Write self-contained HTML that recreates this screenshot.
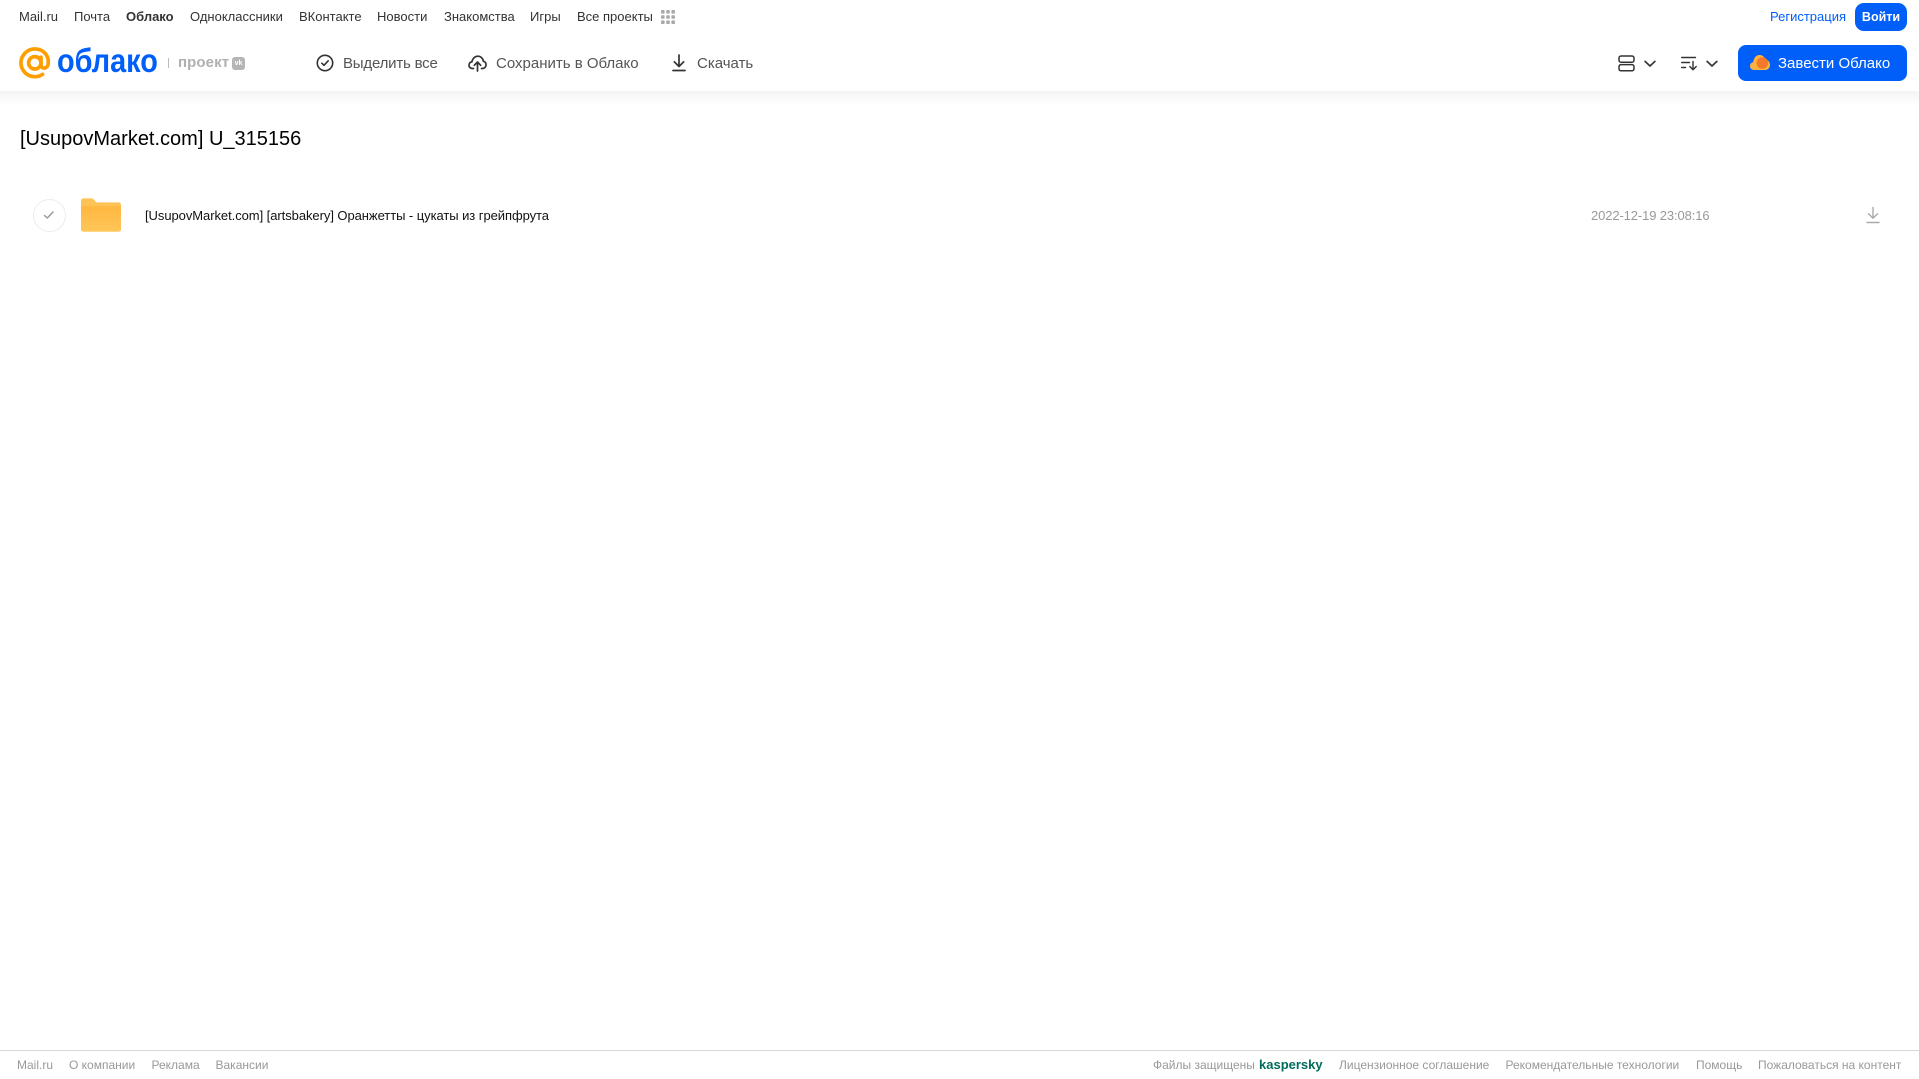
<!DOCTYPE html>
<html lang="ru">
<head>
<meta charset="utf-8">
<title>Облако</title>
<style>
html,body{margin:0;padding:0;width:1919px;height:1079px;overflow:hidden;background:#fff}
body{position:relative;font-family:"Liberation Sans",Arial,sans-serif}
.t{position:absolute;white-space:nowrap;line-height:20px;height:20px}
.n{font-size:13px;color:#333;top:7px}
.a{font-size:15px;color:#555;top:54px}
.f{font-size:12px;color:#999;top:1055px}
svg{position:absolute;overflow:visible}
</style>
</head>
<body>
<div style="position:absolute;left:0;top:91px;width:1919px;height:14px;background:linear-gradient(#f4f4f4,#fff)"></div>

<span class="t n" style="left:19px">Mail.ru</span>
<span class="t n" style="left:74px">Почта</span>
<span class="t n" style="left:126px;font-weight:bold">Облако</span>
<span class="t n" style="left:190px">Одноклассники</span>
<span class="t n" style="left:299px">ВКонтакте</span>
<span class="t n" style="left:377px">Новости</span>
<span class="t n" style="left:444px">Знакомства</span>
<span class="t n" style="left:530px">Игры</span>
<span class="t n" style="left:577px">Все проекты</span>
<svg style="left:660px;top:9px" width="16" height="16" viewBox="0 0 16 16" fill="#aaa">
<rect x="1" y="1" width="3.6" height="3.6" rx=".8"/><rect x="6.2" y="1" width="3.6" height="3.6" rx=".8"/><rect x="11.4" y="1" width="3.6" height="3.6" rx=".8"/>
<rect x="1" y="6.2" width="3.6" height="3.6" rx=".8"/><rect x="6.2" y="6.2" width="3.6" height="3.6" rx=".8"/><rect x="11.4" y="6.2" width="3.6" height="3.6" rx=".8"/>
<rect x="1" y="11.4" width="3.6" height="3.6" rx=".8"/><rect x="6.2" y="11.4" width="3.6" height="3.6" rx=".8"/><rect x="11.4" y="11.4" width="3.6" height="3.6" rx=".8"/>
</svg>
<span class="t" style="left:1770px;top:7px;font-size:13px;color:#005ff9">Регистрация</span>
<div class="t" style="left:1855px;top:3px;width:52px;height:28px;line-height:28px;background:#005ff9;border-radius:9px;color:#fff;font-size:12.5px;font-weight:bold;text-align:center">Войти</div>

<!-- logo -->
<svg style="left:19px;top:47px" width="32" height="32" viewBox="0 0 33 33" fill="none" stroke="#ff9e00" stroke-width="3.8">
<circle cx="16.3" cy="16.3" r="6.4"/>
<path d="M22.7 10.5V18.5C22.7 23 29.7 23 30.2 17C31 8 24.5 2 16.3 2C8.5 2 2 8.5 2 16.3C2 24.3 8.5 30.6 16.3 30.6C19.5 30.6 22 29.8 24.3 28.2" stroke-linecap="round"/>
</svg>
<span class="t" style="left:57px;top:43px;height:36px;line-height:36px;font-size:33px;font-weight:bold;color:#005ff9;transform:scaleX(.875);transform-origin:0 50%">облако</span>
<div style="position:absolute;left:168px;top:58px;width:1px;height:10px;background:#bbb"></div>
<span class="t" style="left:178px;top:53px;font-size:15px;font-weight:bold;color:#b0b0b0;letter-spacing:.1px">проект</span>
<div style="position:absolute;left:232px;top:57px;width:13px;height:13px;background:#b5b5b5;border-radius:3px;color:#fff;font-size:7px;font-weight:bold;line-height:13px;text-align:center">vk</div>

<!-- actions -->
<svg style="left:316px;top:54px" width="18" height="18" viewBox="0 0 18 18" fill="none" stroke="#333" stroke-width="1.6">
<circle cx="9" cy="9" r="7.7"/><path d="M5.8 9.2L8 11.3L12.2 6.8" stroke-linecap="round" stroke-linejoin="round"/>
</svg>
<span class="t a" style="left:343px;letter-spacing:-.2px">Выделить все</span>
<svg style="left:468px;top:54px" width="19" height="18" viewBox="0 0 19 18" fill="none" stroke="#333" stroke-width="1.7" stroke-linecap="round" stroke-linejoin="round">
<path d="M5.5 14.5H4.3C2.4 14.5 1 13 1 11.2C1 9.5 2.2 8.1 3.9 7.9C4.3 4.9 6.7 2.2 9.8 2.2C12.7 2.2 15 4.4 15.4 7.3C17 7.6 18 9 18 10.7C18 12.8 16.5 14.5 14.5 14.5H13.5"/>
<path d="M9.5 17V8.5M6.3 11.3L9.5 8L12.7 11.3"/>
</svg>
<span class="t a" style="left:496px">Сохранить в Облако</span>
<svg style="left:671px;top:54px" width="16" height="18" viewBox="0 0 16 18" fill="none" stroke="#333" stroke-width="1.7" stroke-linecap="round" stroke-linejoin="round">
<path d="M8 1V12M3.3 7.8L8 12.5L12.7 7.8M2 16.5H14"/>
</svg>
<span class="t a" style="left:697px">Скачать</span>

<!-- right controls -->
<svg style="left:1618px;top:55px" width="17" height="17" viewBox="0 0 17 17" fill="none" stroke="#333" stroke-width="1.5">
<rect x="1" y="1" width="15" height="6.2" rx="2"/><rect x="1" y="9.6" width="15" height="6.2" rx="2"/>
</svg>
<svg style="left:1644px;top:60px" width="12" height="8" viewBox="0 0 13 8" fill="none" stroke="#333" stroke-width="1.8" stroke-linecap="round" stroke-linejoin="round"><path d="M1.2 1.2L6.5 6.2L11.8 1.2"/></svg>
<svg style="left:1681px;top:56px" width="17" height="15" viewBox="0 0 17 15" fill="none" stroke="#333" stroke-width="1.4" stroke-linecap="round" stroke-linejoin="round">
<path d="M.7 1.5H14.5M.7 6.5H8.5M.7 11.5H4.5M12 5.5V13.5M8.8 10.5L12 13.7L15.2 10.5"/>
</svg>
<svg style="left:1706px;top:60px" width="12" height="8" viewBox="0 0 13 8" fill="none" stroke="#333" stroke-width="1.8" stroke-linecap="round" stroke-linejoin="round"><path d="M1.2 1.2L6.5 6.2L11.8 1.2"/></svg>

<div style="position:absolute;left:1738px;top:45px;width:169px;height:36px;background:#005ff9;border-radius:8px"></div>
<svg style="left:1750px;top:54px" width="20" height="17" viewBox="0 0 20 17">
<path d="M4 16C1.8 16 0 14.2 0 12C0 10 1.4 8.5 3.2 8.1C3.8 4 6.2 1 9.5 1C12.2 1 14.4 2.7 15 5.2C17.8 5.6 20 8 20 11C20 13.9 17.8 16 15 16Z" fill="#ffb33e"/>
<circle cx="12.3" cy="9" r="5.8" fill="#f5792a"/>
</svg>
<span class="t" style="left:1778px;top:53px;font-size:15px;color:#fff;line-height:21px">Завести Облако</span>

<!-- title -->
<div class="t" style="left:20px;top:126px;height:26px;line-height:26px;font-size:20px;color:#000">[UsupovMarket.com] U_315156</div>

<!-- row -->
<div style="position:absolute;left:33px;top:199px;width:31px;height:31px;border:1px solid #ececec;border-radius:50%"></div>
<svg style="left:43px;top:210px" width="12" height="10" viewBox="0 0 12 10" fill="none" stroke="#999" stroke-width="1.5" stroke-linecap="round" stroke-linejoin="round"><path d="M1.5 5.5L4.3 8L10 2"/></svg>
<svg style="left:81px;top:198px" width="40" height="34" viewBox="0 0 41 34">
<defs><linearGradient id="g" x1="0" y1="0" x2="0" y2="1"><stop offset="0" stop-color="#ffb73f"/><stop offset="1" stop-color="#ffc659"/></linearGradient></defs>
<path d="M0 2.5C0 1 1 0 2.5 0H10.5C12 0 13 .7 14 2L15.5 4H38.5C40 4 41 5 41 6.5V31.5C41 33 40 34 38.5 34H2.5C1 34 0 33 0 31.5Z" fill="#ffc355"/>
<path d="M0 8H41V31.5C41 33 40 34 38.5 34H2.5C1 34 0 33 0 31.5Z" fill="url(#g)"/>
</svg>
<span class="t" style="left:145px;top:206px;font-size:13px;color:#111;letter-spacing:-.06px">[UsupovMarket.com] [artsbakery] Оранжетты - цукаты из грейпфрута</span>
<span class="t" style="left:1591px;top:206px;font-size:13px;color:#999;letter-spacing:-.12px">2022-12-19 23:08:16</span>
<svg style="left:1866px;top:206px" width="14" height="18" viewBox="0 0 14 18" fill="none" stroke="#aaa" stroke-width="1.4" stroke-linecap="round" stroke-linejoin="round">
<path d="M7 1.5V12M2.5 7.8L7 12.3L11.5 7.8M1 16.5H13"/>
</svg>

<!-- footer -->
<div style="position:absolute;left:0;top:1050px;width:1919px;height:1px;background:#d8d8d8"></div>
<span class="t f" style="left:17px">Mail.ru</span>
<span class="t f" style="left:69px">О компании</span>
<span class="t f" style="left:151.5px">Реклама</span>
<span class="t f" style="left:215.5px">Вакансии</span>
<span class="t f" style="left:1153px">Файлы защищены</span>
<span class="t f" style="left:1259px;color:#006d5c;font-weight:bold;font-size:13px">kaspersky</span>
<span class="t f" style="left:1339px">Лицензионное соглашение</span>
<span class="t f" style="left:1505.5px">Рекомендательные технологии</span>
<span class="t f" style="left:1696px">Помощь</span>
<span class="t f" style="left:1758px">Пожаловаться на контент</span>
</body>
</html>
